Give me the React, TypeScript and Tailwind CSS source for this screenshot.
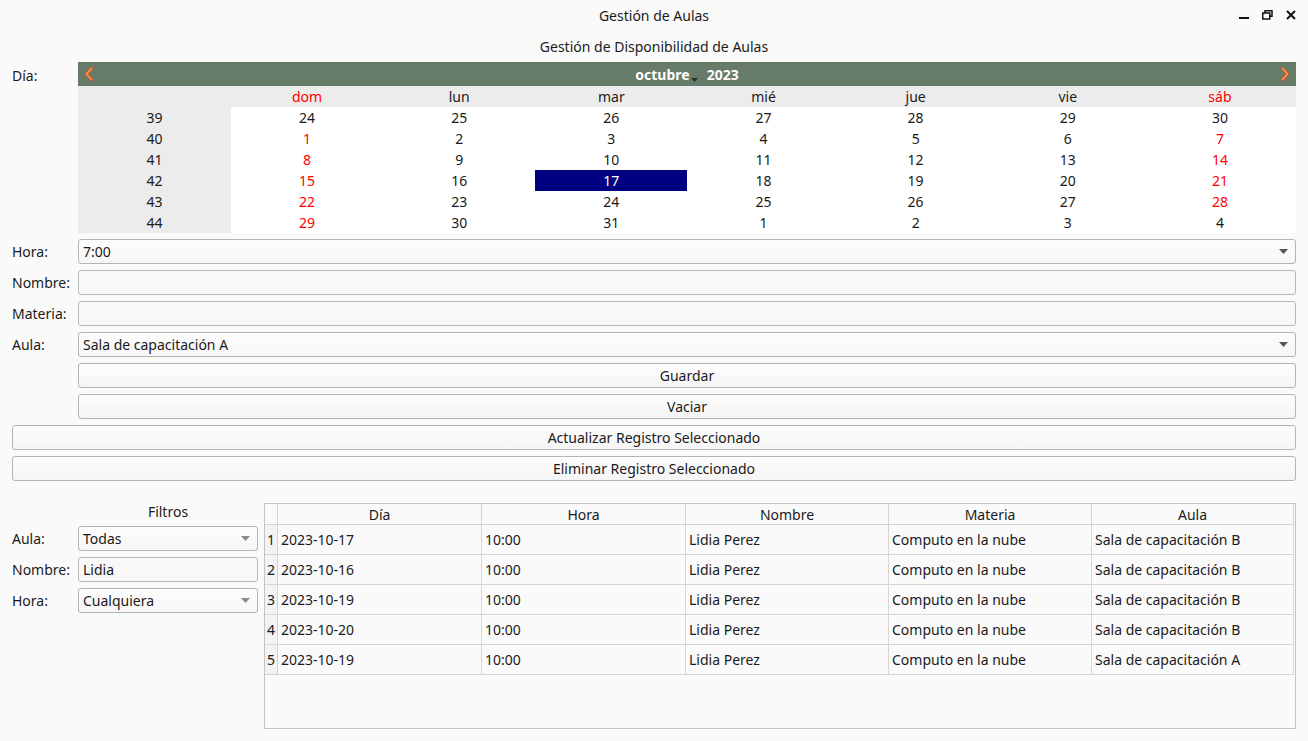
import React from "react";

const F = { fontFamily: '"Noto Sans", "Open Sans", sans-serif' };

const weeks: { n: number; days: { d: number; red: boolean }[] }[] = [
  { n: 39, days: [24, 25, 26, 27, 28, 29, 30].map((d) => ({ d, red: false })) },
  { n: 40, days: [1, 2, 3, 4, 5, 6, 7].map((d, i) => ({ d, red: i === 0 || i === 6 })) },
  { n: 41, days: [8, 9, 10, 11, 12, 13, 14].map((d, i) => ({ d, red: i === 0 || i === 6 })) },
  { n: 42, days: [15, 16, 17, 18, 19, 20, 21].map((d, i) => ({ d, red: i === 0 || i === 6 })) },
  { n: 43, days: [22, 23, 24, 25, 26, 27, 28].map((d, i) => ({ d, red: i === 0 || i === 6 })) },
  { n: 44, days: [29, 30, 31, 1, 2, 3, 4].map((d, i) => ({ d, red: i === 0 })) },
];

const dayNames = ["dom", "lun", "mar", "mié", "jue", "vie", "sáb"];

const rows = [
  ["2023-10-17", "10:00", "Lidia Perez", "Computo en la nube", "Sala de capacitación B"],
  ["2023-10-16", "10:00", "Lidia Perez", "Computo en la nube", "Sala de capacitación B"],
  ["2023-10-19", "10:00", "Lidia Perez", "Computo en la nube", "Sala de capacitación B"],
  ["2023-10-20", "10:00", "Lidia Perez", "Computo en la nube", "Sala de capacitación B"],
  ["2023-10-19", "10:00", "Lidia Perez", "Computo en la nube", "Sala de capacitación A"],
];

function Arrow({ light }: { light?: boolean }) {
  return (
    <svg width="9" height="5" viewBox="0 0 9 5">
      <path d="M0 0 L9 0 L4.5 5 Z" fill={light ? "#8a8a8a" : "#555"} />
    </svg>
  );
}

function Combo({ text, light }: { text: string; light?: boolean }) {
  return (
    <div className="h-[25px] flex-1 rounded-[3px] border border-[#b4b4b4] bg-gradient-to-b from-[#fdfdfd] to-[#f6f6f6] flex items-center justify-between pl-[4px] pr-[7px]">
      <span>{text}</span>
      <Arrow light={light} />
    </div>
  );
}

function Field({ text }: { text?: string }) {
  return (
    <div className="h-[25px] flex-1 rounded-[3px] border border-[#b8b8b8] bg-[#f8f8f8] flex items-center pl-[4px]">
      {text}
    </div>
  );
}

function Button({ text }: { text: string }) {
  return (
    <div className="h-[25px] flex-1 rounded-[3px] border border-[#b4b4b4] bg-gradient-to-b from-[#fdfdfd] to-[#f5f5f5] flex items-center justify-center">
      {text}
    </div>
  );
}

function Chevron({ dir }: { dir: "l" | "r" }) {
  const d = dir === "l" ? "M7.5 1.5 L2.5 7 L7.5 12.5" : "M2.5 1.5 L7.5 7 L2.5 12.5";
  return (
    <svg width="10" height="14" viewBox="0 0 10 14">
      <path d={d} stroke="#d9581e" strokeWidth="3.2" fill="none" strokeLinecap="round" strokeLinejoin="round" />
      <path d={d} stroke="#f79a5a" strokeWidth="1.4" fill="none" strokeLinecap="round" strokeLinejoin="round" />
    </svg>
  );
}

export default function App() {
  return (
    <div
      className="w-[1308px] h-[741px] bg-[#fafafa] text-[14px] text-[#1a1a1a] flex flex-col overflow-hidden"
      style={F}
    >
      {/* Title bar */}
      <div className="h-[30px] relative flex items-center justify-center shrink-0">
        <span>Gestión de Aulas</span>
        <div className="absolute right-[12px] top-0 h-[30px] flex items-center gap-[13px]">
          <svg width="10" height="10" viewBox="0 0 10 10">
            <rect x="0" y="7" width="10" height="2" fill="#111" />
          </svg>
          <svg width="11" height="10" viewBox="0 0 11 10">
            <rect x="3" y="0.75" width="7" height="5.5" fill="none" stroke="#111" strokeWidth="1.5" />
            <rect x="0.75" y="3" width="7" height="6" fill="#fafafa" stroke="#111" strokeWidth="1.5" />
          </svg>
          <svg width="10" height="10" viewBox="0 0 10 10">
            <path d="M1 1 L9 9 M9 1 L1 9" stroke="#111" strokeWidth="2" />
          </svg>
        </div>
      </div>

      <div className="h-[32px] flex items-center justify-center shrink-0">
        Gestión de Disponibilidad de Aulas
      </div>

      <div className="px-[12px] flex flex-col">
        {/* Calendar */}
        <div className="flex">
          <div className="w-[66px] shrink-0 h-[26px] flex items-center">Día:</div>
          <div className="flex-1 flex flex-col">
            <div className="h-[24px] bg-[#667b69] flex items-center justify-between px-[6px]">
              <Chevron dir="l" />
              <div className="flex items-center text-white font-bold text-[14px] pt-[1px]">
                <span>octubre</span>
                <svg width="7" height="4" viewBox="0 0 7 4" className="mt-[11px] ml-[1px]">
                  <path d="M0 0 L7 0 L3.5 4 Z" fill="#2a2a2a" />
                </svg>
                <span className="ml-[9px]">2023</span>
              </div>
              <Chevron dir="r" />
            </div>
            <div className="grid grid-cols-[153px_repeat(7,1fr)]">
              <div className="h-[21px] bg-[#ececec]" />
              {dayNames.map((n, i) => (
                <div
                  key={n}
                  className={`h-[21px] bg-[#ececec] flex items-center justify-center ${
                    i === 0 || i === 6 ? "text-[#ff0000]" : ""
                  }`}
                >
                  {n}
                </div>
              ))}
              {weeks.map((w) => (
                <React.Fragment key={w.n}>
                  <div className="h-[21px] bg-[#ececec] flex items-center justify-center">{w.n}</div>
                  {w.days.map((d, i) => {
                    const sel = w.n === 42 && d.d === 17;
                    return (
                      <div
                        key={i}
                        className={`h-[21px] flex items-center justify-center ${
                          sel ? "bg-[#000080] text-white" : d.red ? "bg-white text-[#ff0000]" : "bg-white"
                        }`}
                      >
                        {d.d}
                      </div>
                    );
                  })}
                </React.Fragment>
              ))}
            </div>
          </div>
        </div>

        {/* Form */}
        <div className="flex flex-col gap-[6px] mt-[6px]">
          <div className="flex items-center">
            <div className="w-[66px] shrink-0">Hora:</div>
            <Combo text="7:00" />
          </div>
          <div className="flex items-center">
            <div className="w-[66px] shrink-0">Nombre:</div>
            <Field />
          </div>
          <div className="flex items-center">
            <div className="w-[66px] shrink-0">Materia:</div>
            <Field />
          </div>
          <div className="flex items-center">
            <div className="w-[66px] shrink-0">Aula:</div>
            <Combo text="Sala de capacitación A" />
          </div>
          <div className="flex pl-[66px]">
            <Button text="Guardar" />
          </div>
          <div className="flex pl-[66px]">
            <Button text="Vaciar" />
          </div>
          <div className="flex">
            <Button text="Actualizar Registro Seleccionado" />
          </div>
          <div className="flex">
            <Button text="Eliminar Registro Seleccionado" />
          </div>
        </div>

        {/* Bottom */}
        <div className="flex gap-[6px] mt-[22px]">
          <div className="w-[246px] shrink-0 flex flex-col gap-[6px]">
            <div className="flex">
              <div className="w-[66px] shrink-0" />
              <div className="flex-1 h-[18px] flex items-center justify-center mt-[-1px]">Filtros</div>
            </div>
            <div className="flex items-center">
              <div className="w-[66px] shrink-0">Aula:</div>
              <Combo text="Todas" light />
            </div>
            <div className="flex items-center">
              <div className="w-[66px] shrink-0">Nombre:</div>
              <Field text="Lidia" />
            </div>
            <div className="flex items-center">
              <div className="w-[66px] shrink-0">Hora:</div>
              <Combo text="Cualquiera" light />
            </div>
          </div>

          <div className="flex-1 h-[226px] border border-[#c4c4c4] bg-[#fafafa] overflow-hidden">
            <div className="grid grid-cols-[13px_204px_204px_203px_203px_202px]">
              <div className="h-[21px] border-b border-r border-[#d2d2d2]" />
              {["Día", "Hora", "Nombre", "Materia", "Aula"].map((h) => (
                <div
                  key={h}
                  className="h-[21px] border-b border-r border-[#d2d2d2] flex items-center justify-center"
                >
                  {h}
                </div>
              ))}
              {rows.map((r, i) => (
                <React.Fragment key={i}>
                  <div className="h-[30px] border-b border-r border-[#d2d2d2] bg-[#f3f3f3] flex items-center justify-center">
                    {i + 1}
                  </div>
                  {r.map((c, j) => (
                    <div
                      key={j}
                      className="h-[30px] border-b border-r border-[#d6d6d6] flex items-center pl-[3px]"
                    >
                      {c}
                    </div>
                  ))}
                </React.Fragment>
              ))}
            </div>
          </div>
        </div>
      </div>
    </div>
  );
}
